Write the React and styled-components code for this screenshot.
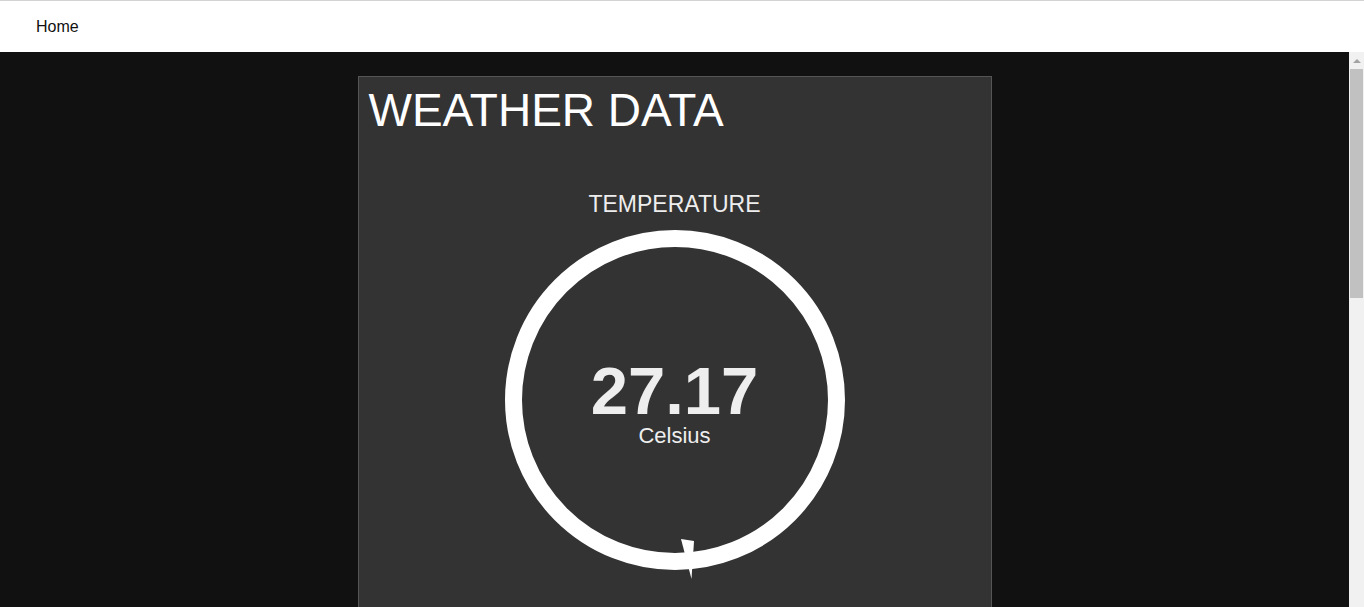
import React from 'react';
import styled, { createGlobalStyle } from 'styled-components';

const GlobalStyle = createGlobalStyle`
  html, body {
    margin: 0;
    padding: 0;
    height: 100%;
    overflow: hidden;
    font-family: "Liberation Sans", Arial, sans-serif;
  }
  #root {
    height: 100%;
  }
`;

const Page = styled.div`
  display: flex;
  flex-direction: column;
  height: 100vh;
`;

const NavBar = styled.nav`
  flex: 0 0 auto;
  height: 51px;
  border-top: 1px solid #d3d3d3;
  background: #fff;
  display: flex;
  align-items: center;
  padding: 0 36px;
`;

const NavLink = styled.a`
  font-size: 16px;
  color: #111;
  text-decoration: none;
  line-height: 1;
  margin-top: 1px;
`;

const Body = styled.div`
  flex: 1 1 auto;
  min-height: 0;
  display: flex;
`;

const Main = styled.main`
  flex: 1 1 auto;
  overflow: hidden;
  background: #111;
  padding: 24px 0;
  box-sizing: border-box;
`;

// classic scrollbar, drawn since the headless page hides the real one
const ScrollRail = styled.div`
  flex: 0 0 15px;
  background: #f1f1f1;
  display: flex;
  flex-direction: column;
  align-items: center;
`;

const ScrollArrow = styled.div`
  flex: 0 0 17px;
  width: 15px;
  display: flex;
  align-items: center;
  justify-content: center;

  &::before {
    content: '';
    width: 0;
    height: 0;
    border-left: 4px solid transparent;
    border-right: 4px solid transparent;
    border-bottom: 4px solid #a3a3a3;
  }
`;

const ScrollThumb = styled.div`
  width: 13px;
  height: ${p => p.$size}px;
  background: #c1c1c1;
`;

const Card = styled.section`
  width: 634px;
  min-height: 1215px;
  margin: 0 auto;
  box-sizing: border-box;
  background: #333;
  border: 1px solid #555;
  padding: 6px 10px 4px;
  display: flex;
  flex-direction: column;
  align-items: stretch;
`;

const Title = styled.h1`
  margin: 0;
  font-size: 46px;
  font-weight: 400;
  line-height: 55px;
  color: #fff;
`;

const GaugeBlock = styled.div`
  margin-top: 51px;
  display: flex;
  flex-direction: column;
  align-items: center;
`;

const GaugeLabel = styled.h3`
  margin: 2px 0 13px;
  font-size: 23px;
  font-weight: 400;
  line-height: 26px;
  color: #eee;
`;

const Dial = styled.div`
  position: relative;
  width: 340px;
  height: 340px;

  svg {
    display: block;
    overflow: visible;
  }
`;

const Readout = styled.div`
  position: absolute;
  inset: 0;
  display: flex;
  flex-direction: column;
  align-items: center;
  padding-top: 128px;
  box-sizing: border-box;
`;

const Value = styled.span`
  font-size: 67px;
  font-weight: 700;
  line-height: 66px;
  color: #eee;
`;

const Unit = styled.span`
  margin-top: 1px;
  font-size: 22px;
  line-height: 22px;
  color: #eee;
`;

const Gauge = ({ label, value, unit }) => (
  <GaugeBlock>
    <GaugeLabel>{label}</GaugeLabel>
    <Dial>
      <svg width="340" height="340" viewBox="0 0 340 340">
        <circle cx="170" cy="170" r="161.5" fill="none" stroke="#fff" strokeWidth="17" />
        <polygon points="176,309 189,311 186.5,349" fill="#fff" />
      </svg>
      <Readout>
        <Value>{value}</Value>
        <Unit>{unit}</Unit>
      </Readout>
    </Dial>
  </GaugeBlock>
);

const App = () => (
  <Page>
    <GlobalStyle />
    <NavBar>
      <NavLink href="#">Home</NavLink>
    </NavBar>
    <Body>
      <Main>
        <Card>
          <Title>WEATHER DATA</Title>
          <Gauge label="TEMPERATURE" value="27.17" unit="Celsius" />
        </Card>
      </Main>
      <ScrollRail>
        <ScrollArrow />
        <ScrollThumb $size={229} />
      </ScrollRail>
    </Body>
  </Page>
);

export default App;
